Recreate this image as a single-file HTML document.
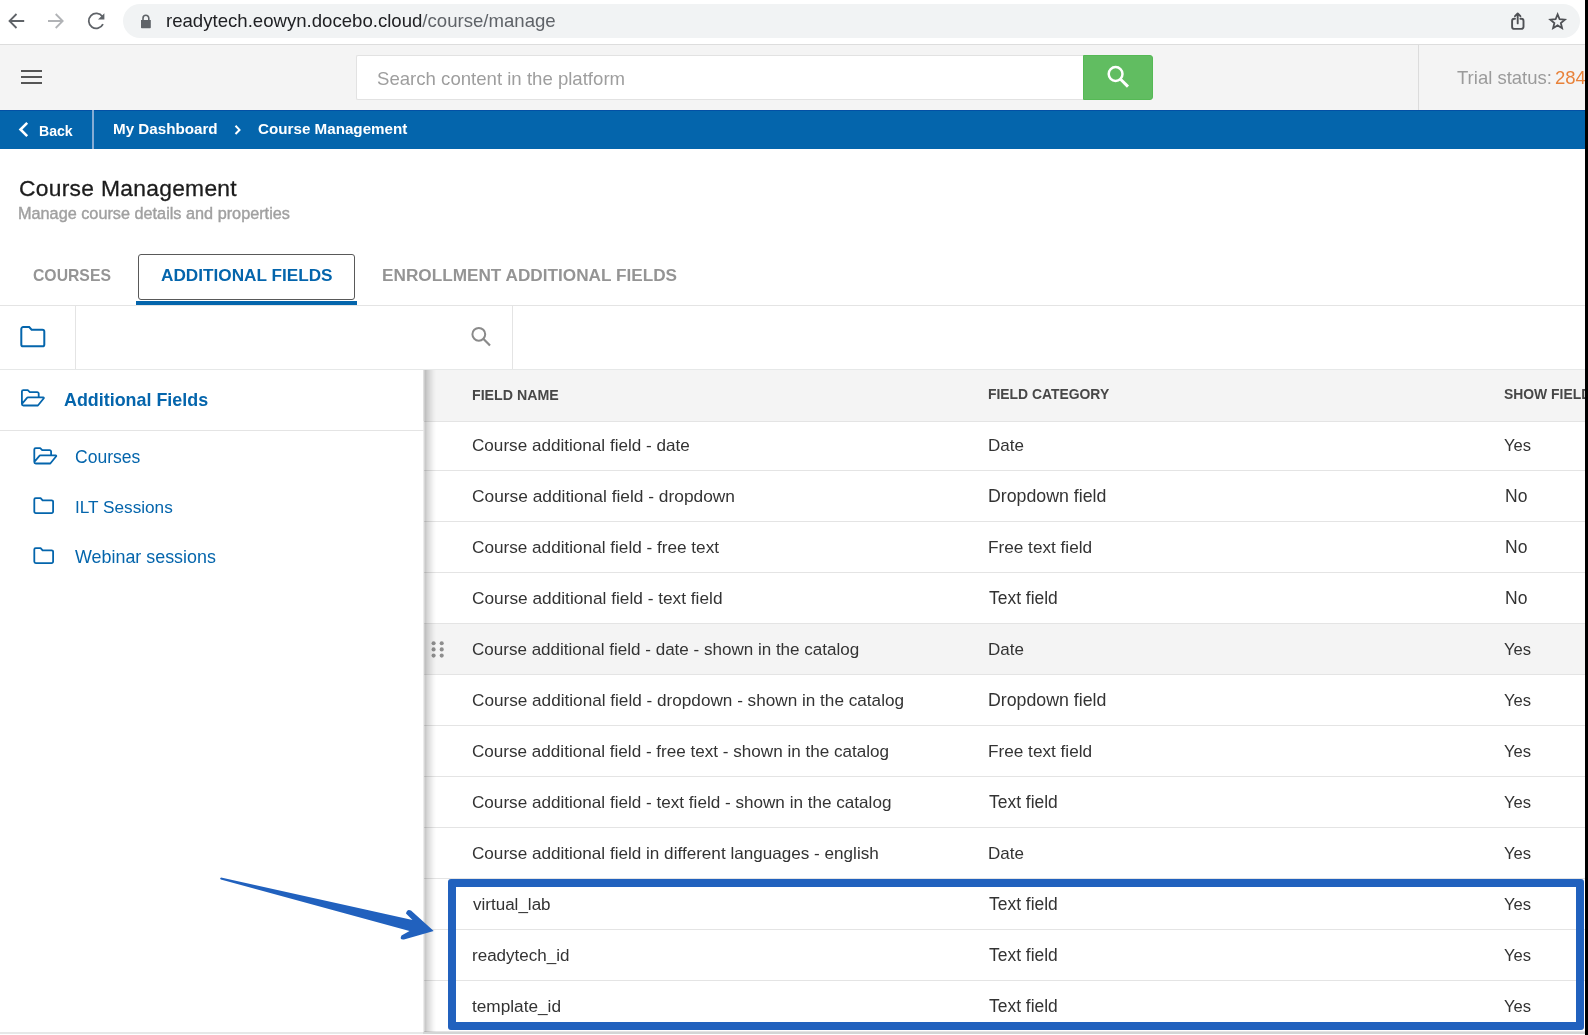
<!DOCTYPE html>
<html><head><meta charset="utf-8">
<style>
html,body{margin:0;padding:0;background:#fff;}
body{width:1588px;height:1035px;overflow:hidden;position:relative;font-family:"Liberation Sans",sans-serif;}
.a{position:absolute;}
.t{position:absolute;line-height:1;white-space:nowrap;will-change:transform;}
#chrome{left:0;top:0;width:1588px;height:44px;background:#fff;}
#pill{left:123px;top:4px;width:1457px;height:34px;border-radius:17px;background:#f1f3f4;}
#cline{left:0;top:43.6px;width:1588px;height:1.4px;background:#dddddd;}
#hdr{left:0;top:45px;width:1588px;height:65px;background:#f4f4f4;}
#blue{left:0;top:110px;width:1588px;height:39.2px;background:#0465ac;border-top:1px solid #0350a5;box-sizing:border-box;}
#rbar{left:1585px;top:0;width:3px;height:1035px;background:#000;}
</style></head>
<body>
<!-- browser chrome -->
<div class="a" id="chrome"></div>
<div class="a" id="pill"></div>
<div class="a" id="cline"></div>
<svg class="a" style="left:0;top:0" width="160" height="44" viewBox="0 0 160 44">
  <g fill="none" stroke="#5f6368" stroke-width="1.8" stroke-linecap="butt">
    <path d="M24.2 21 H9.5 M16.5 14 L9.5 21 L16.5 28"/>
  </g>
  <g fill="none" stroke="#b1b3b6" stroke-width="1.8">
    <path d="M48 21 H62.7 M55.7 14 L62.7 21 L55.7 28"/>
  </g>
  <g fill="none" stroke="#5f6368" stroke-width="1.8">
    <path d="M102.4 16.6 A7.5 7.5 0 1 0 103 24.2"/>
  </g>
  <path d="M104.4 13.2 V19.6 H98 Z" fill="#5f6368"/>
  <path d="M141 20 h9.8 v7.4 a0.8 0.8 0 0 1 -0.8 0.8 h-8.2 a0.8 0.8 0 0 1 -0.8 -0.8 Z" fill="#5f6368"/>
  <path d="M143 20 v-1.8 a2.9 2.9 0 0 1 5.8 0 v1.8" fill="none" stroke="#5f6368" stroke-width="1.6"/>
</svg>
<div class="t" style="left:166px;top:11.5px;font-size:18.6px;color:#202124;">readytech.eowyn.docebo.cloud<span style="color:#5f6368">/course/manage</span></div>
<svg class="a" style="left:1500px;top:8px" width="70" height="28" viewBox="0 0 70 28">
  <g fill="none" stroke="#4f5155" stroke-width="1.9" stroke-linejoin="round" stroke-linecap="round">
    <path d="M15 10.8 H14.3 a2.2 2.2 0 0 0 -2.2 2.2 V18.7 a2.2 2.2 0 0 0 2.2 2.2 H21.3 a2.2 2.2 0 0 0 2.2 -2.2 V13 a2.2 2.2 0 0 0 -2.2 -2.2 H20.4"/>
    <path d="M17.7 15.4 V5.6 M15 8.2 L17.7 5.4 L20.4 8.2"/>
    <path d="M57.60 6.40 L59.60 11.25 L64.83 11.65 L60.83 15.05 L62.07 20.15 L57.60 17.40 L53.13 20.15 L54.37 15.05 L50.37 11.65 L55.60 11.25 Z" stroke-width="1.8" stroke-linejoin="miter"/>
  </g>
</svg>

<!-- header -->
<div class="a" id="hdr"></div>
<div class="a" style="left:21px;top:70px;width:21px;height:2px;background:#555"></div>
<div class="a" style="left:21px;top:76px;width:21px;height:2px;background:#555"></div>
<div class="a" style="left:21px;top:82px;width:21px;height:2px;background:#555"></div>
<div class="a" style="left:356px;top:55px;width:727px;height:45px;background:#fff;border:1px solid #e2e2e2;border-right:none;box-sizing:border-box;border-radius:2px 0 0 2px;"></div>
<div class="t" style="left:377px;top:69.5px;font-size:18.6px;color:#9e9e9e;">Search content in the platform</div>
<div class="a" style="left:1083px;top:55px;width:70px;height:45px;background:#61bd61;border:1px solid #55b955;box-sizing:border-box;border-radius:0 3px 3px 0;"></div>
<svg class="a" style="left:1083px;top:55px" width="70" height="44" viewBox="0 0 70 44">
  <circle cx="32.6" cy="19" r="6.9" fill="none" stroke="#fff" stroke-width="2.5"/>
  <path d="M37.3 24 L45 31.6" stroke="#fff" stroke-width="3" stroke-linecap="butt"/>
</svg>
<div class="a" style="left:1418px;top:45px;width:1px;height:65px;background:#dcdcdc"></div>
<div class="t" style="left:1456.5px;top:68.8px;font-size:18.5px;color:#9b9b9b;">Trial status:</div>
<div class="t" style="left:1554.6px;top:68.8px;font-size:18.5px;color:#e8823a;">284</div>

<!-- blue breadcrumb -->
<div class="a" id="blue"></div>
<svg class="a" style="left:0;top:109px" width="40" height="40" viewBox="0 0 40 40">
  <path d="M27.2 13.8 L20.5 20.5 L27.2 27.2" fill="none" stroke="#fff" stroke-width="2.6"/>
</svg>
<div class="t" style="left:38.6px;top:124px;font-size:14.1px;font-weight:bold;color:#fff;">Back</div>
<div class="a" style="left:92.2px;top:110px;width:1.6px;height:39.2px;background:#86acd4"></div>
<div class="t" style="left:113px;top:121.2px;font-size:15.2px;font-weight:bold;color:#fff;">My Dashboard</div>
<svg class="a" style="left:228.6px;top:120px" width="20" height="20" viewBox="0 0 20 20">
  <path d="M6.5 5.8 L10.5 9.9 L6.5 14" fill="none" stroke="#fff" stroke-width="2"/>
</svg>
<div class="t" style="left:258px;top:121.2px;font-size:15.2px;font-weight:bold;color:#fff;">Course Management</div>


<!-- page title -->
<div class="t" style="left:19px;top:177.3px;font-size:22.8px;letter-spacing:0.3px;color:#1c1c1c;-webkit-text-stroke:0.3px #1c1c1c;">Course Management</div>
<div class="t" style="left:18.3px;top:205px;font-size:16.25px;color:#a0a0a0;-webkit-text-stroke:0.4px #a0a0a0;">Manage course details and properties</div>

<!-- tabs -->
<div class="t" style="left:32.6px;top:268.4px;font-size:15.75px;font-weight:bold;color:#959595;">COURSES</div>
<div class="a" style="left:138px;top:254px;width:217px;height:46px;border:1.6px solid #595959;border-radius:3px;box-sizing:border-box;"></div>
<div class="t" style="left:160.7px;top:266.9px;font-size:17.2px;font-weight:bold;color:#0465ac;">ADDITIONAL FIELDS</div>
<div class="t" style="left:382px;top:267.1px;font-size:17.22px;font-weight:bold;color:#949494;">ENROLLMENT ADDITIONAL FIELDS</div>
<div class="a" style="left:136px;top:301.2px;width:221px;height:3.6px;background:#0465ac"></div>
<div class="a" style="left:0;top:305px;width:1588px;height:1px;background:#e4e4e4"></div>

<!-- search row -->
<div class="a" style="left:75px;top:306px;width:1px;height:63px;background:#e4e4e4"></div>
<div class="a" style="left:512px;top:306px;width:1px;height:63px;background:#e4e4e4"></div>
<svg class="a" style="left:18px;top:322px" width="30" height="30" viewBox="0 0 30 30">
  <path d="M3.3 7 a1.9 1.9 0 0 1 1.9 -1.9 h6 l2.4 2.6 h10.8 a1.9 1.9 0 0 1 1.9 1.9 v12.8 a1.9 1.9 0 0 1 -1.9 1.9 h-19.2 a1.9 1.9 0 0 1 -1.9 -1.9 Z" fill="none" stroke="#0465ac" stroke-width="2"/>
</svg>
<svg class="a" style="left:468px;top:324px" width="26" height="26" viewBox="0 0 26 26">
  <circle cx="10.8" cy="10.3" r="6.4" fill="none" stroke="#8a8a8a" stroke-width="2"/>
  <path d="M15.3 14.8 L22 21.5" stroke="#8a8a8a" stroke-width="2.2"/>
</svg>

<!-- table header -->
<div class="a" style="left:423px;top:369px;width:1165px;height:52px;background:#f4f4f4"></div>
<div class="a" style="left:424px;top:421px;width:1164px;height:1px;background:#e4e4e4"></div>
<div class="t" style="left:472px;top:387.9px;font-size:14.2px;font-weight:bold;color:#474747;">FIELD NAME</div>
<div class="t" style="left:988px;top:387.9px;font-size:13.9px;font-weight:bold;color:#474747;">FIELD CATEGORY</div>
<div class="t" style="left:1504px;top:387.9px;font-size:13.9px;font-weight:bold;color:#474747;">SHOW FIELD</div>

<!--ROWSTART-->
<div class="a" style="left:423.50px;top:624px;width:1165px;height:50px;background:#f4f4f4"></div>
<div class="t" style="left:471.94px;top:436.91px;font-size:17.12px;color:#333;">Course additional field - date</div>
<div class="t" style="left:987.51px;top:437.01px;font-size:17.0px;color:#333;">Date</div>
<div class="t" style="left:1504.20px;top:438.05px;font-size:16.6px;color:#333;">Yes</div>
<div class="a" style="left:423.50px;top:470px;width:1165px;height:1px;background:#e4e4e4"></div>
<div class="t" style="left:471.93px;top:487.72px;font-size:17.34px;color:#333;">Course additional field - dropdown</div>
<div class="t" style="left:988.14px;top:488.07px;font-size:17.76px;color:#333;">Dropdown field</div>
<div class="t" style="left:1504.56px;top:488.29px;font-size:17.5px;color:#333;">No</div>
<div class="a" style="left:423.50px;top:521px;width:1165px;height:1px;background:#e4e4e4"></div>
<div class="t" style="left:471.94px;top:538.87px;font-size:17.16px;color:#333;">Course additional field - free text</div>
<div class="t" style="left:987.52px;top:538.83px;font-size:17.21px;color:#333;">Free text field</div>
<div class="t" style="left:1504.56px;top:539.29px;font-size:17.5px;color:#333;">No</div>
<div class="a" style="left:423.50px;top:572px;width:1165px;height:1px;background:#e4e4e4"></div>
<div class="t" style="left:471.94px;top:589.77px;font-size:17.28px;color:#333;">Course additional field - text field</div>
<div class="t" style="left:988.55px;top:589.62px;font-size:17.46px;color:#333;">Text field</div>
<div class="t" style="left:1504.56px;top:590.29px;font-size:17.5px;color:#333;">No</div>
<div class="a" style="left:423.50px;top:623px;width:1165px;height:1px;background:#e4e4e4"></div>
<div class="t" style="left:471.95px;top:640.98px;font-size:17.04px;color:#333;">Course additional field - date - shown in the catalog</div>
<div class="t" style="left:987.51px;top:641.01px;font-size:17.0px;color:#333;">Date</div>
<div class="t" style="left:1504.20px;top:642.05px;font-size:16.6px;color:#333;">Yes</div>
<div class="a" style="left:423.50px;top:674px;width:1165px;height:1px;background:#e4e4e4"></div>
<div class="t" style="left:471.94px;top:691.87px;font-size:17.17px;color:#333;">Course additional field - dropdown - shown in the catalog</div>
<div class="t" style="left:988.14px;top:692.07px;font-size:17.76px;color:#333;">Dropdown field</div>
<div class="t" style="left:1504.20px;top:693.05px;font-size:16.6px;color:#333;">Yes</div>
<div class="a" style="left:423.50px;top:725px;width:1165px;height:1px;background:#e4e4e4"></div>
<div class="t" style="left:471.94px;top:742.92px;font-size:17.1px;color:#333;">Course additional field - free text - shown in the catalog</div>
<div class="t" style="left:987.52px;top:742.83px;font-size:17.21px;color:#333;">Free text field</div>
<div class="t" style="left:1504.20px;top:744.05px;font-size:16.6px;color:#333;">Yes</div>
<div class="a" style="left:423.50px;top:776px;width:1165px;height:1px;background:#e4e4e4"></div>
<div class="t" style="left:471.94px;top:793.91px;font-size:17.12px;color:#333;">Course additional field - text field - shown in the catalog</div>
<div class="t" style="left:988.55px;top:793.62px;font-size:17.46px;color:#333;">Text field</div>
<div class="t" style="left:1504.20px;top:795.05px;font-size:16.6px;color:#333;">Yes</div>
<div class="a" style="left:423.50px;top:827px;width:1165px;height:1px;background:#e4e4e4"></div>
<div class="t" style="left:471.94px;top:844.92px;font-size:17.11px;color:#333;">Course additional field in different languages - english</div>
<div class="t" style="left:987.51px;top:845.01px;font-size:17.0px;color:#333;">Date</div>
<div class="t" style="left:1504.20px;top:846.05px;font-size:16.6px;color:#333;">Yes</div>
<div class="a" style="left:423.50px;top:878px;width:1165px;height:1px;background:#e4e4e4"></div>
<div class="t" style="left:472.63px;top:895.98px;font-size:17.03px;color:#333;">virtual_lab</div>
<div class="t" style="left:988.55px;top:895.62px;font-size:17.46px;color:#333;">Text field</div>
<div class="t" style="left:1504.20px;top:897.05px;font-size:16.6px;color:#333;">Yes</div>
<div class="a" style="left:423.50px;top:929px;width:1165px;height:1px;background:#e4e4e4"></div>
<div class="t" style="left:471.61px;top:946.98px;font-size:17.03px;color:#333;">readytech_id</div>
<div class="t" style="left:988.55px;top:946.62px;font-size:17.46px;color:#333;">Text field</div>
<div class="t" style="left:1504.20px;top:948.05px;font-size:16.6px;color:#333;">Yes</div>
<div class="a" style="left:423.50px;top:980px;width:1165px;height:1px;background:#e4e4e4"></div>
<div class="t" style="left:472.46px;top:997.81px;font-size:17.23px;color:#333;">template_id</div>
<div class="t" style="left:988.55px;top:997.62px;font-size:17.46px;color:#333;">Text field</div>
<div class="t" style="left:1504.20px;top:999.05px;font-size:16.6px;color:#333;">Yes</div>
<div class="a" style="left:423.50px;top:1031px;width:1165px;height:1px;background:#e4e4e4"></div>
<!--ROWEND-->
<svg class="a" style="left:0;top:0" width="460" height="700" viewBox="0 0 460 700"><g fill="#8e8e8e"><circle cx="433.6" cy="643.2" r="2.05"/><circle cx="433.6" cy="649.4" r="2.05"/><circle cx="433.6" cy="655.6" r="2.05"/><circle cx="441.7" cy="643.2" r="2.05"/><circle cx="441.7" cy="649.4" r="2.05"/><circle cx="441.7" cy="655.6" r="2.05"/></g></svg>

<div class="a" style="left:0;top:369px;width:1588px;height:1.4px;background:#e6e8e8"></div>
<div class="a" style="left:0;top:370px;width:423px;height:663px;background:#fff;"></div>
<div class="a" style="left:423px;top:370px;width:14px;height:663px;background:linear-gradient(to right,rgba(0,0,0,0.04) 0px,rgba(0,0,0,0.22) 2.3px,rgba(0,0,0,0.15) 4.6px,rgba(0,0,0,0.10) 7px,rgba(0,0,0,0.03) 10.4px,rgba(0,0,0,0) 13px);"></div>
<div class="a" style="left:0;top:430px;width:424px;height:1px;background:#e4e4e4"></div>
<svg class="a" style="left:0;top:369px" width="70" height="200" viewBox="0 0 70 200">
 <g fill="none" stroke="#0465ac" stroke-width="1.8" stroke-linejoin="round" transform="translate(-12.4,3)">
  <path d="M34.3 32 V19.6 a1.5 1.5 0 0 1 1.5 -1.5 h4.4 l2 2 h7.4 a1.5 1.5 0 0 1 1.5 1.5 v3.8 M34.3 32 a1.5 1.5 0 0 0 1.5 1.5 h14.5 l5.9 -7.2 a0.6 0.6 0 0 0 -0.5 -0.9 h-15.2 a1.5 1.5 0 0 0 -1.3 0.7 Z"/>
 </g>
</svg>
<div class="t" style="left:63.5px;top:391.6px;font-size:17.9px;font-weight:bold;color:#0465ac;">Additional Fields</div>
<svg class="a" style="left:0;top:430px" width="70" height="150" viewBox="0 0 70 150">
 <g fill="none" stroke="#0465ac" stroke-width="1.8" stroke-linejoin="round">
  <path d="M34.3 32 V19.6 a1.5 1.5 0 0 1 1.5 -1.5 h4.4 l2 2 h7.4 a1.5 1.5 0 0 1 1.5 1.5 v3.8 M34.3 32 a1.5 1.5 0 0 0 1.5 1.5 h14.5 l5.9 -7.2 a0.6 0.6 0 0 0 -0.5 -0.9 h-15.2 a1.5 1.5 0 0 0 -1.3 0.7 Z"/>
  <path d="M34.3 69.6 a1.5 1.5 0 0 1 1.5 -1.5 h4.8 l2 2.2 h9 a1.5 1.5 0 0 1 1.5 1.5 v9.8 a1.5 1.5 0 0 1 -1.5 1.5 h-15.8 a1.5 1.5 0 0 1 -1.5 -1.5 Z"/>
  <path d="M34.3 119.6 a1.5 1.5 0 0 1 1.5 -1.5 h4.8 l2 2.2 h9 a1.5 1.5 0 0 1 1.5 1.5 v9.8 a1.5 1.5 0 0 1 -1.5 1.5 h-15.8 a1.5 1.5 0 0 1 -1.5 -1.5 Z"/>
 </g>
</svg>
<div class="t" style="left:75.2px;top:449.1px;font-size:17.55px;color:#0465ac;">Courses</div>
<div class="t" style="left:75.4px;top:498.6px;font-size:17.2px;color:#0465ac;">ILT Sessions</div>
<div class="t" style="left:75.1px;top:549px;font-size:17.9px;color:#0465ac;">Webinar sessions</div>
<div class="a" style="left:0;top:1032px;width:423px;height:1.6px;background:#e6e8e8"></div><div class="a" style="left:423px;top:1032px;width:1165px;height:1.6px;background:#d3d5d5"></div>


<div class="a" style="left:448px;top:879px;width:1136px;height:151px;border:8px solid #2161be;box-sizing:border-box;border-radius:3px;"></div>
<svg class="a" style="left:0;top:0" width="460" height="1035" viewBox="0 0 460 1035">
 <path d="M221 877.6 L412.5 920 L406 913.5 Q407 908.5 411 910.5 L433.7 931 L404 939.5 Q399 940 401.5 935.5 L409.5 931 L220.8 879.5 Q219.2 878.6 221 877.6 Z" fill="#2161be"/>
</svg>

<div class="a" id="rbar"></div>
</body></html>
